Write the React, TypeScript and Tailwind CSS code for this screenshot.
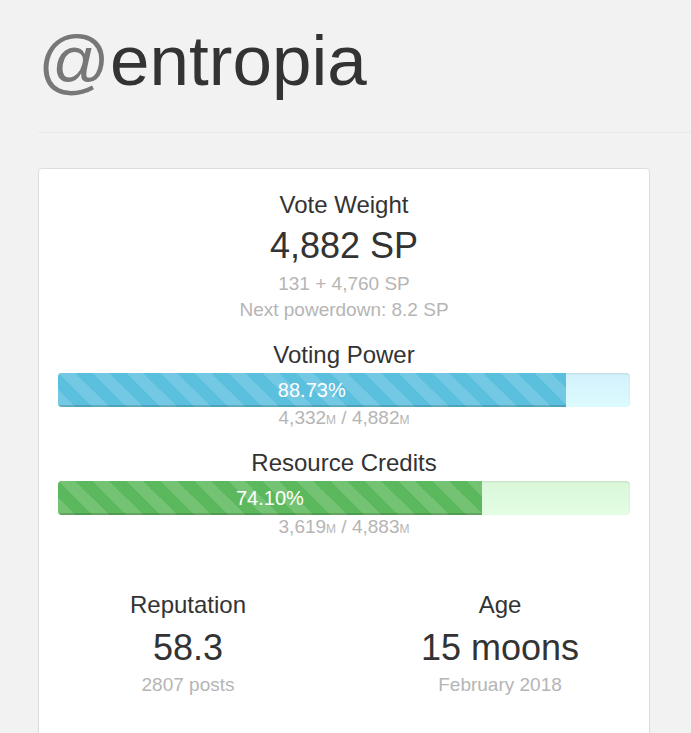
import React from 'react';

const stripes =
  'linear-gradient(45deg, rgba(255,255,255,.15) 25%, transparent 25%, transparent 50%, rgba(255,255,255,.15) 50%, rgba(255,255,255,.15) 75%, transparent 75%, transparent)';

type BarProps = { pct: number; label: string; fill: string; track: string };

const Bar: React.FC<BarProps> = ({ pct, label, fill, track }) => (
  <div className={`mt-[2px] h-[34px] w-full overflow-hidden rounded-[4px] shadow-[inset_0_1px_2px_rgba(0,0,0,0.1)] ${track}`}>
    <div
      className={`flex h-full items-center justify-center bg-[length:34px_34px] text-[20px] text-white shadow-[inset_0_-2px_0_rgba(0,0,0,0.15)] ${fill}`}
      style={{ width: `${pct}%`, backgroundImage: stripes }}
    >
      {label}
    </div>
  </div>
);

const Mana: React.FC<{ cur: string; max: string; className?: string }> = ({ cur, max, className = '' }) => (
  <p className={`text-[19px] leading-[22px] text-[#b5b5b5] ${className}`}>
    {cur}
    <span className="text-[12px]">M</span> / {max}
    <span className="text-[12px]">M</span>
  </p>
);

export default function App() {
  return (
    <div className="min-h-[733px] bg-[#f2f2f2] pl-[38px] font-['Liberation_Sans',Arial,sans-serif] text-[#333]">
      <div className="pt-[22px]">
        <h1 className="text-[71px] leading-[78px]">
          <span className="text-[#777]">@</span>entropia
        </h1>
        <div className="mt-[32px] border-t border-[#e9e9e9]" />
      </div>

      <div className="mt-[35px] w-[612px] rounded-[4px] border border-[#dcdcdc] bg-white px-[19px] pb-[40px] pt-[20px] text-center shadow-[0_1px_1px_rgba(0,0,0,0.05)]">
        <section>
          <h2 className="text-[24px] leading-[32px]">Vote Weight</h2>
          <p className="mt-[5px] text-[36px] leading-[40px]">4,882 SP</p>
          <p className="mt-[5px] text-[19px] leading-[26px] text-[#b5b5b5]">131 + 4,760 SP</p>
          <p className="text-[19px] leading-[26px] text-[#b5b5b5]">Next powerdown: 8.2 SP</p>
        </section>

        <section className="mt-[16px]">
          <h2 className="text-[24px] leading-[32px]">Voting Power</h2>
          <Bar pct={88.73} label="88.73%" fill="bg-[#5bc0de]" track="bg-gradient-to-b from-[#d3f1fb] to-[#dcfcff]" />
          <Mana cur="4,332" max="4,882" />
        </section>

        <section className="mt-[16px]">
          <h2 className="text-[24px] leading-[32px]">Resource Credits</h2>
          <Bar pct={74.1} label="74.10%" fill="bg-[#5cb85c]" track="bg-gradient-to-b from-[#daf7da] to-[#e3fee3]" />
          <Mana cur="3,619" max="4,883" className="mt-[1px]" />
        </section>

        <div className="mt-[49px] grid grid-cols-2 gap-[52px]">
          <div>
            <h2 className="text-[24px] leading-[32px]">Reputation</h2>
            <p className="mt-[7px] text-[36px] leading-[40px]">58.3</p>
            <p className="mt-[4px] text-[19px] leading-[26px] text-[#b5b5b5]">2807 posts</p>
          </div>
          <div>
            <h2 className="text-[24px] leading-[32px]">Age</h2>
            <p className="mt-[7px] text-[36px] leading-[40px]">15 moons</p>
            <p className="mt-[4px] text-[19px] leading-[26px] text-[#b5b5b5]">February 2018</p>
          </div>
        </div>
      </div>
    </div>
  );
}
